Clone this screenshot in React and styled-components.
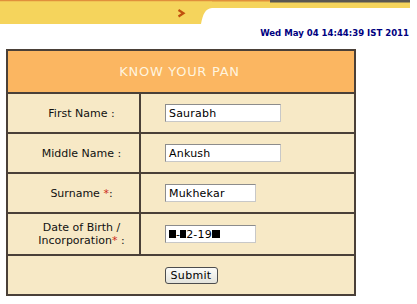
import React from "react";
import styled, { createGlobalStyle } from "styled-components";

const Global = createGlobalStyle`
  html, body { margin: 0; padding: 0; background: #ffffff; }
  body { font-family: "DejaVu Sans", Verdana, sans-serif; width: 417px; height: 304px; overflow: hidden; }
`;

const Page = styled.div`
  width: 417px;
  height: 304px;
  background: #fff;
  display: flex;
  flex-direction: column;
`;

const Banner = styled.svg`
  display: block;
  width: 417px;
  height: 25px;
`;

const DateLine = styled.div`
  box-sizing: border-box;
  height: 24px;
  padding: 2px 8px 0 0;
  text-align: right;
  line-height: 11px;
  font-family: "DejaVu Sans Condensed", "DejaVu Sans", sans-serif;
  font-stretch: condensed;
  font-size: 9.5px;
  font-weight: bold;
  color: #000080;
`;

const Table = styled.table`
  margin-left: 6px;
  width: 348px;
  border-collapse: collapse;
  border: 2px solid #4a4038;
  background: #f7e9c6;
  font-size: 11px;
  color: #111;
  table-layout: fixed;
`;

const LabelCol = styled.col`
  width: 133px;
`;

const FieldCol = styled.col`
  width: 215px;
`;

const HeadCell = styled.th`
  background: #fbb661;
  height: 41px;
  padding: 0 3px 0 0;
  font-weight: normal;
  font-size: 13px;
  color: #fff4de;
  letter-spacing: 0.7px;
  border-bottom: 2px solid #4a4038;
`;

const LabelCell = styled.td`
  height: ${(p) => p.$h || 38}px;
  padding: 0 0 0 16px;
  text-align: center;
  border: 2px solid #4a4038;
  line-height: 13px;
  color: #111;
`;

const FieldCell = styled.td`
  padding: 0 0 0 24px;
  border: 2px solid #4a4038;
`;

const Star = styled.span`
  color: #cc2a1a;
`;

const Field = styled.div`
  box-sizing: border-box;
  width: ${(p) => p.$w}px;
  height: 18px;
  border: 1px solid #8c8c8c;
  border-right-color: #c8c8c8;
  border-bottom-color: #c8c8c8;
  background: #fff;
  padding: 0 3px;
  display: flex;
  align-items: center;
  font-size: 11px;
  color: #000;
  letter-spacing: 0.2px;
`;

const Redact = styled.span`
  display: inline-block;
  width: ${(p) => p.$w}px;
  height: 8px;
  background: #000;
`;

const ButtonCell = styled.td`
  height: 38px;
  text-align: center;
  padding: 0 0 0 20px;
  border: 2px solid #4a4038;
`;

const SubmitButton = styled.button`
  font-family: "DejaVu Sans", Verdana, sans-serif;
  font-size: 11px;
  color: #000;
  height: 17px;
  width: 53px;
  padding: 0;
  border: 1px solid #4d4d4d;
  border-radius: 3px;
  background: linear-gradient(#fbfbf8, #e4e4dc);
  letter-spacing: 0.3px;
  vertical-align: middle;
`;

export default function App() {
  return (
    <Page>
      <Global />
      <Banner viewBox="0 0 417 25">
        <rect x="0" y="0" width="410" height="8" fill="#f5d45c" />
        <rect x="0" y="0" width="270" height="1.5" fill="#e0903c" />
        <rect x="270" y="0" width="140" height="2.5" fill="#5a5650" />
        <path d="M0 1.5 H212 V8 C205 9 203 14 201 24 H0 Z" fill="#f5d45c" />
        <path d="M178.5 10 L183.5 13.2 L178.5 16.5" fill="none" stroke="#c0500e" strokeWidth="2.2" />
      </Banner>
      <DateLine>Wed May 04 14:44:39 IST 2011</DateLine>
      <Table>
        <colgroup>
          <LabelCol />
          <FieldCol />
        </colgroup>
        <thead>
          <tr>
            <HeadCell colSpan={2}>KNOW YOUR PAN</HeadCell>
          </tr>
        </thead>
        <tbody>
          <tr>
            <LabelCell $h={38}>First Name :</LabelCell>
            <FieldCell><Field $w={116}>Saurabh</Field></FieldCell>
          </tr>
          <tr>
            <LabelCell $h={38}>Middle Name :</LabelCell>
            <FieldCell><Field $w={116}>Ankush</Field></FieldCell>
          </tr>
          <tr>
            <LabelCell $h={38}>Surname <Star>*</Star>:</LabelCell>
            <FieldCell><Field $w={91}>Mukhekar</Field></FieldCell>
          </tr>
          <tr>
            <LabelCell $h={40}>Date of Birth /<br />Incorporation<Star>*</Star> :</LabelCell>
            <FieldCell>
              <Field $w={91}>
                <Redact $w={7} />-<Redact $w={6} />2-19<Redact $w={8} />
              </Field>
            </FieldCell>
          </tr>
          <tr>
            <ButtonCell colSpan={2}><SubmitButton>Submit</SubmitButton></ButtonCell>
          </tr>
        </tbody>
      </Table>
    </Page>
  );
}
